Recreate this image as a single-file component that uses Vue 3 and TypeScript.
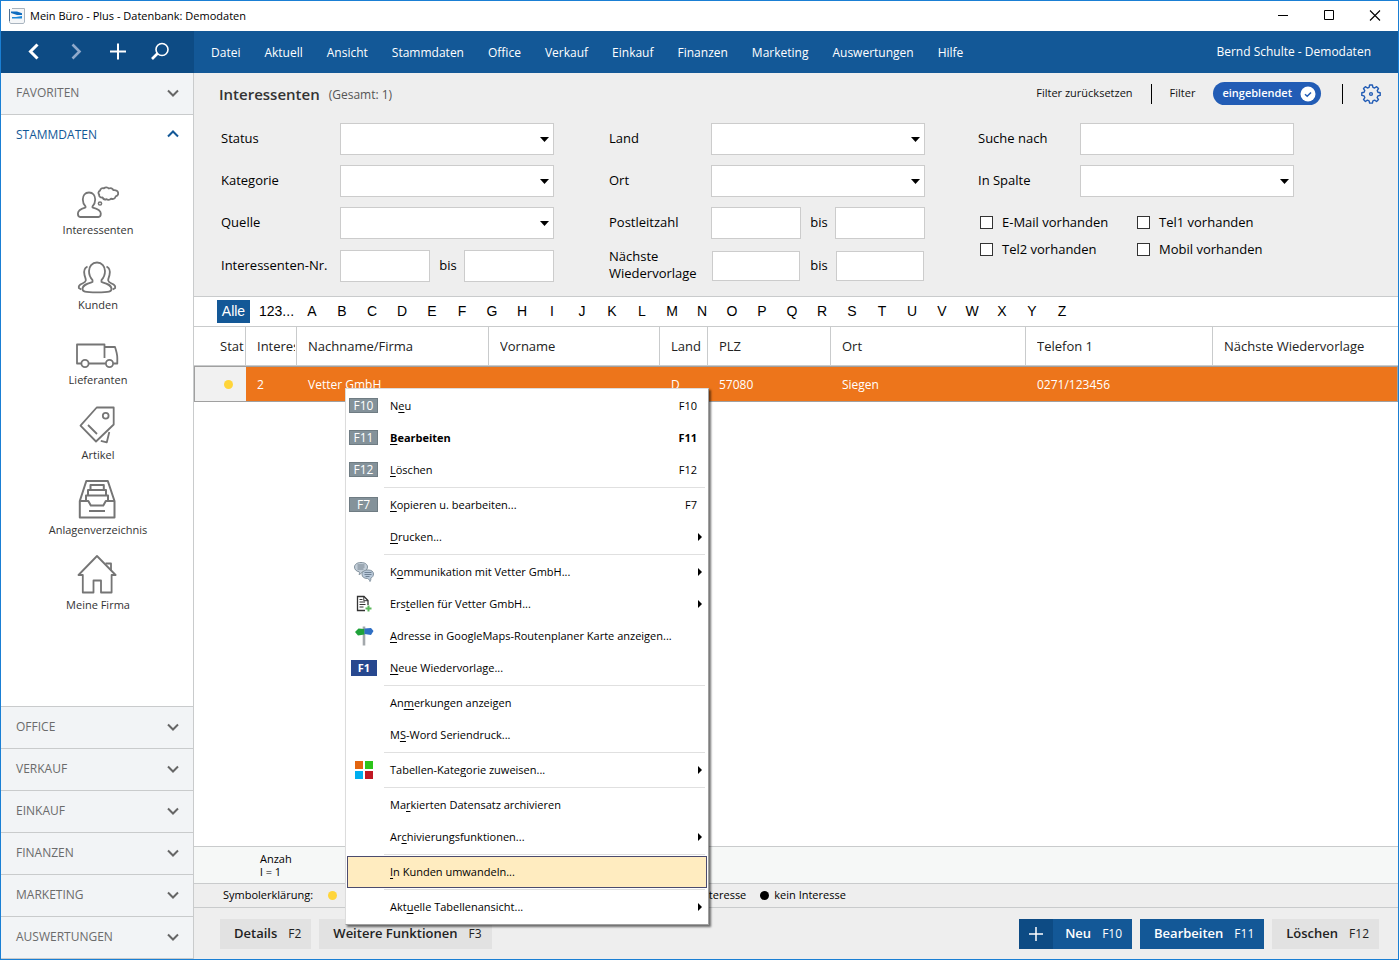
<script setup lang="ts">
import { ref } from 'vue'

interface MenuEntry {
  before: string
  key: string
  after: string
  shortcut?: string
  badge?: string
  icon?: 'chat' | 'doc' | 'sign' | 'f1' | 'tiles'
  submenu?: boolean
  bold?: boolean
  active?: boolean
}

const mainMenu = ['Datei', 'Aktuell', 'Ansicht', 'Stammdaten', 'Office', 'Verkauf', 'Einkauf', 'Finanzen', 'Marketing', 'Auswertungen', 'Hilfe']
const modules = ['Interessenten', 'Kunden', 'Lieferanten', 'Artikel', 'Anlagenverzeichnis', 'Meine Firma']
const lowerSections = ['OFFICE', 'VERKAUF', 'EINKAUF', 'FINANZEN', 'MARKETING', 'AUSWERTUNGEN']
const letters = 'ABCDEFGHIJKLMNOPQRSTUVWXYZ'.split('')
const columns = ['Interes', 'Nachname/Firma', 'Vorname', 'Land', 'PLZ', 'Ort', 'Telefon 1', 'Nächste Wiedervorlage']
const row = ['2', 'Vetter GmbH', '', 'D', '57080', 'Siegen', '0271/123456', '']
const checks = ref([
  { id: 'email', label: 'E-Mail vorhanden', on: false },
  { id: 'tel1', label: 'Tel1 vorhanden', on: false },
  { id: 'tel2', label: 'Tel2 vorhanden', on: false },
  { id: 'mobil', label: 'Mobil vorhanden', on: false },
])

const menuGroups: MenuEntry[][] = [
  [
    { before: 'N', key: 'e', after: 'u', shortcut: 'F10', badge: 'F10' },
    { before: '', key: 'B', after: 'earbeiten', shortcut: 'F11', badge: 'F11', bold: true },
    { before: '', key: 'L', after: 'öschen', shortcut: 'F12', badge: 'F12' },
  ],
  [
    { before: '', key: 'K', after: 'opieren u. bearbeiten...', shortcut: 'F7', badge: 'F7' },
    { before: '', key: 'D', after: 'rucken...', submenu: true },
  ],
  [
    { before: 'K', key: 'o', after: 'mmunikation mit Vetter GmbH...', icon: 'chat', submenu: true },
    { before: 'Ers', key: 't', after: 'ellen für Vetter GmbH...', icon: 'doc', submenu: true },
    { before: '', key: 'A', after: 'dresse in GoogleMaps-Routenplaner Karte anzeigen...', icon: 'sign' },
    { before: '', key: 'N', after: 'eue Wiedervorlage...', icon: 'f1' },
  ],
  [
    { before: 'An', key: 'm', after: 'erkungen anzeigen' },
    { before: 'M', key: 'S', after: '-Word Seriendruck...' },
  ],
  [{ before: 'Tabellen-Kate', key: 'g', after: 'orie zuweisen...', icon: 'tiles', submenu: true }],
  [
    { before: 'Ma', key: 'r', after: 'kierten Datensatz archivieren' },
    { before: 'Ar', key: 'c', after: 'hivierungsfunktionen...', submenu: true },
  ],
  [{ before: '', key: 'I', after: 'n Kunden umwandeln...', active: true }],
  [{ before: 'Akt', key: 'u', after: 'elle Tabellenansicht...', submenu: true }],
]
</script>

<template>
  <div class="window">
    <header class="titlebar">
      <svg class="app-icon" width="16" height="16" viewBox="0 0 16 16" aria-hidden="true">
        <path d="M3 .5h12.5v13.5l-1 1.500H1.500L.5 14V2" fill="#f4f6f8" stroke="#a9b4bf" />
        <path d="M.5 1v12" stroke="#4f6f92" />
        <path d="M2 3.500h6l5 1.800v1.700H8L2 5z" fill="#0f6cbf" />
        <path d="M3 9h4l6-1v2.500H3z" fill="#1a86d9" />
      </svg>
      <span class="app-title">Mein Büro - Plus - Datenbank: Demodaten</span>
      <div class="win-buttons">
        <button type="button" aria-label="Minimieren"><svg width="12" height="12" viewBox="0 0 12 12"><path d="M1 5.500h10" stroke="#000" /></svg></button>
        <button type="button" aria-label="Maximieren"><svg width="12" height="12" viewBox="0 0 12 12"><path d="M1.500 .5h9v9h-9z" fill="none" stroke="#000" /></svg></button>
        <button type="button" aria-label="Schließen"><svg width="12" height="12" viewBox="0 0 12 12"><path d="M1 .5l10 10M11 .5L1 10.500" stroke="#000" stroke-width="1.100" /></svg></button>
      </div>
    </header>

    <div class="topbar">
      <div class="history">
        <button type="button" aria-label="Zurück"><svg width="20" height="20" viewBox="0 0 20 20"><path d="M13.500 2.500L6.500 9.500l7 7" fill="none" stroke="#fff" stroke-width="3" /></svg></button>
        <button type="button" aria-label="Vor"><svg width="20" height="20" viewBox="0 0 20 20"><path d="M6.500 2.500l7 7-7 7" fill="none" stroke="#8fa9cb" stroke-width="2.600" /></svg></button>
        <button type="button" aria-label="Neu anlegen"><svg width="20" height="20" viewBox="0 0 20 20"><path d="M10 1.500v16M2 9.500h16" stroke="#fff" stroke-width="2" /></svg></button>
        <button type="button" aria-label="Suchen"><svg width="20" height="20" viewBox="0 0 20 20"><circle cx="12" cy="7.500" r="6" fill="none" stroke="#fff" stroke-width="1.600" /><path d="M7.500 11.500L2 17" stroke="#fff" stroke-width="2.600" /></svg></button>
      </div>
      <nav class="main-menu">
        <button v-for="m in mainMenu" :key="m" type="button">{{ m }}</button>
      </nav>
      <span class="user">Bernd Schulte - Demodaten</span>
    </div>

    <div class="body">
      <aside class="sidebar">
        <button type="button" class="section">
          <span>FAVORITEN</span>
          <svg width="14" height="8" viewBox="0 0 14 8"><path d="M2 1.500l5 5 5-5" fill="none" stroke="#666" stroke-width="2" /></svg>
        </button>
        <button type="button" class="section open">
          <span>STAMMDATEN</span>
          <svg width="14" height="8" viewBox="0 0 14 8"><path d="M2 6.500l5-5 5 5" fill="none" stroke="#135897" stroke-width="2" /></svg>
        </button>
        <div class="modules">
          <button v-for="(m, i) in modules" :key="m" type="button" class="module">
            <svg width="44" height="40" viewBox="0 0 44 40" fill="none" stroke="#757575" stroke-width="1.800" stroke-linejoin="round">
              <g v-if="i === 0">
                <path d="M14 12.500c4 0 6.200 3 6.200 7 0 3.200-1.400 5.500-2.700 6.800v1.200c3.500.9 8.300 2 8.300 6 0 1.600-.8 3.500-2.300 3.500H5.200c-1.500 0-2.300-1.900-2.300-3.500 0-4 4.400-5.100 7.600-6v-1.200C9.200 25 7.800 22.700 7.800 19.500c0-4 2.200-7 6.200-7z" />
                <path d="M27.500 17.500c-2 .3-3.700-1-3.300-2.800-1.200-1.300-.9-3.400.8-4 .3-2 2.200-3 3.900-2.400 1.500-1.300 3.700-1.200 4.900.2 1.800-.9 4 0 4.600 1.700 2.500-.4 4.800 1 4.800 3.300 0 1.600-1.200 2.600-2.500 2.900-.4 2.200-2.800 3.200-4.600 2.200-1.400 1.600-3.600 1.500-4.600.5-1.500.7-3.200.1-4-1.600z" />
                <circle cx="25" cy="23.500" r="1.600" stroke-width="1.500" />
              </g>
              <g v-else-if="i === 1">
                <path d="M22 7.500c5 0 8 4 8 8.500 0 4.200-1.600 7-3.500 9v2c4.500 1.300 10 2.500 10 7 0 2.500-1.800 3.300-14.500 3.300S7.500 36.500 7.500 34c0-4.500 5.500-5.700 10-7v-2c-1.900-2-3.500-4.800-3.500-9 0-4.500 3-8.500 8-8.500z" />
                <path d="M12.500 11.500c-3 1.500-4 4.500-3 8.500.4 2 1.500 3.500 1.300 5.500-.3 2.500-4 2.800-6 4.500-1 .8-1.300 1.800-1 3l2.500 1.500" />
                <path d="M31.500 11.500c3 1.500 4 4.500 3 8.500-.4 2-1.500 3.500-1.300 5.500.3 2.500 4 2.800 6 4.500 1 .8 1.300 1.800 1 3l-2.500 1.500" />
              </g>
              <g v-else-if="i === 2">
                <path d="M6 33.500H2V14.500h27.500v13.500M14 33.500h16.500M29.500 17h10.500c1.500 4.500 2.300 7.500 2.300 11v5.500h-4" />
                <circle cx="10" cy="33.500" r="3.600" />
                <circle cx="34.500" cy="33.500" r="3.600" />
              </g>
              <g v-else-if="i === 3">
                <path d="M21.700 2.500h17v17L21 36.500 5.500 20.700z" />
                <circle cx="30.700" cy="10.700" r="2.900" />
                <path d="M13 20l9 9M34.300 27l-2.500 10.300-6-1.500" />
              </g>
              <g v-else-if="i === 4" stroke-width="2">
                <path d="M4.800 21L11.300 1h21.500l6.700 20v16.500H4.800zM4.800 21h8.500l2.500 4.500h12.500l2.500-4.500h8.700" />
                <path d="M15.500 9.500V5h13.300v4.500M13 15.500V10h18v5.500M11 20.500V15.500h22v5" />
                <path d="M14 31h16" />
              </g>
              <g v-else>
                <path d="M7.800 20H3.500L22 1l18.600 19h-4v17.500H26V25.500h-7.500v12H7.800z" />
                <path d="M30.500 8.500h5.500v7.500" />
              </g>
            </svg>
            <span>{{ m }}</span>
          </button>
        </div>
        <button v-for="s in lowerSections" :key="s" type="button" class="section lower">
          <span>{{ s }}</span>
          <svg width="14" height="8" viewBox="0 0 14 8"><path d="M2 1.500l5 5 5-5" fill="none" stroke="#666" stroke-width="2" /></svg>
        </button>
      </aside>

      <main class="content">
        <div class="head">
          <h1>Interessenten</h1>
          <span class="count">(Gesamt: 1)</span>
          <div class="head-tools">
            <button type="button" class="plain">Filter zurücksetzen</button>
            <i class="bar"></i>
            <span class="filter-word">Filter</span>
            <button type="button" class="toggle">
              <span>eingeblendet</span>
              <svg width="16" height="16" viewBox="0 0 16 16"><circle cx="8" cy="8" r="7.500" fill="#fff" /><path d="M5 8.200l2.200 2.100L11 6.400" fill="none" stroke="#225cb5" stroke-width="1.500" /></svg>
            </button>
            <i class="bar second"></i>
            <button type="button" class="gear" aria-label="Einstellungen">
              <svg width="20" height="20" viewBox="0 0 20 20" fill="none" stroke="#225cb5" stroke-width="1.400" stroke-linejoin="round">
                <path d="M8.600 1h2.800l.5 2.300 1.700.7 2-1.300 1.900 1.900-1.300 2 .7 1.700 2.300.5v2.600l-2.300.5-.7 1.700 1.300 2-1.900 1.900-2-1.300-1.700.7-.5 2.200H8.600l-.5-2.200-1.700-.7-2 1.300-1.900-1.900 1.300-2-.7-1.700L.8 11.400V8.800l2.300-.5.7-1.700-1.300-2 1.900-1.900 2 1.300 1.700-.7z" />
                <circle cx="10" cy="10" r="1.400" />
              </svg>
            </button>
          </div>
        </div>

        <form class="filters" @submit.prevent>
          <div class="group g1">
            <label for="f-status">Status</label><select id="f-status"></select>
            <label for="f-kat">Kategorie</label><select id="f-kat"></select>
            <label for="f-quelle">Quelle</label><select id="f-quelle"></select>
            <label for="f-nr">Interessenten-Nr.</label>
            <div class="range"><input id="f-nr" type="text" /><label for="f-nr2">bis</label><input id="f-nr2" type="text" /></div>
          </div>
          <div class="group g2">
            <label for="f-land">Land</label><select id="f-land"></select>
            <label for="f-ort">Ort</label><select id="f-ort"></select>
            <label for="f-plz">Postleitzahl</label>
            <div class="range"><input id="f-plz" type="text" /><label for="f-plz2">bis</label><input id="f-plz2" type="text" /></div>
            <label for="f-wv">Nächste Wiedervorlage</label>
            <div class="range small"><input id="f-wv" type="text" /><label for="f-wv2">bis</label><input id="f-wv2" type="text" /></div>
          </div>
          <div class="group g3">
            <label for="f-suche">Suche nach</label><input id="f-suche" type="text" />
            <label for="f-spalte">In Spalte</label><select id="f-spalte"></select>
            <div class="checks">
              <label v-for="c in checks" :key="c.id" :for="c.id"><input :id="c.id" v-model="c.on" type="checkbox" /><span>{{ c.label }}</span></label>
            </div>
          </div>
        </form>

        <div class="alphabet">
          <button type="button" class="all">Alle</button>
          <button type="button" class="num">123...</button>
          <button v-for="l in letters" :key="l" type="button">{{ l }}</button>
        </div>

        <div class="grid">
          <table>
            <colgroup>
              <col class="c-stat" /><col class="c-nr" /><col class="c-name" /><col class="c-vor" /><col class="c-land" /><col class="c-plz" /><col class="c-ort" /><col class="c-tel" /><col />
            </colgroup>
            <thead>
              <tr>
                <th class="stat"><div>Stat</div></th>
                <th v-for="c in columns" :key="c"><div>{{ c }}</div></th>
              </tr>
            </thead>
            <tbody>
              <tr>
                <td class="stat"><i class="dot yellow"></i></td>
                <td v-for="(v, i) in row" :key="i">{{ v }}</td>
              </tr>
            </tbody>
          </table>
        </div>

        <div class="summary">Anzah<br />l = 1</div>
        <div class="legend">
          <span>Symbolerklärung:</span>
          <i class="dot yellow"></i>
          <span class="interest">Interesse</span>
          <i class="dot black"></i>
          <span>kein Interesse</span>
        </div>
        <footer class="actions">
          <button type="button" class="act">Details<small>F2</small></button>
          <button type="button" class="act">Weitere Funktionen<small>F3</small></button>
          <div class="right">
            <button type="button" class="act blue new">
              <span class="plus"><svg width="14" height="14" viewBox="0 0 14 14"><path d="M7 0v14M0 7h14" stroke="#fff" stroke-width="1.500" /></svg></span>Neu<small>F10</small>
            </button>
            <button type="button" class="act blue">Bearbeiten<small>F11</small></button>
            <button type="button" class="act">Löschen<small>F12</small></button>
          </div>
        </footer>
      </main>
    </div>

    <div class="context" role="menu">
      <div v-for="(g, gi) in menuGroups" :key="gi" class="ctx-group">
        <button v-for="e in g" :key="e.after" type="button" role="menuitem" class="ctx-item" :class="{ bold: e.bold, active: e.active }">
          <span class="ctx-icon">
            <b v-if="e.badge" class="badge">{{ e.badge }}</b>
            <b v-else-if="e.icon === 'f1'" class="badge-f1">F1</b>
            <svg v-else-if="e.icon === 'chat'" width="22" height="22" viewBox="0 0 22 22">
              <path d="M8 1.500c4 0 6.500 1.800 6.500 4.500S12 10.800 9 11c-.5 1.500-1.500 2-3 2.500.6-1 .6-1.800.2-2.700C3.300 10.300 1.500 8.500 1.500 6S4 1.500 8 1.500z" fill="#c3ced8" stroke="#82919d" />
              <path d="M4.500 4h7M4.500 6h7M4.500 8h6" stroke="#74828e" />
              <path d="M15 9c3.500 0 5.500 1.500 5.500 4 0 2-1.200 3.500-2.800 4.200.2 1 .3 2-.7 3.300-.6-1.500-1.300-2.500-2.500-3-3.500 0-5.500-1.600-5.500-4.200S11.500 9 15 9z" fill="#b9c9da" stroke="#82919d" />
              <path d="M11.500 11.500h7M11.500 13.500h7M12.500 15.500h4" stroke="#6f8194" />
            </svg>
            <svg v-else-if="e.icon === 'doc'" width="18" height="18" viewBox="0 0 18 18" fill="none">
              <path d="M10 15.500H2.500v-14H9l4 4V10" stroke="#333" stroke-width="1.300" />
              <path d="M8.800 1.500v4.200H13" stroke="#333" />
              <path d="M4.500 4.500h3M4.500 7h5.500M4.500 9.500h6M4.500 12h4" stroke="#333" />
              <path d="M13.500 10.500v6M10.500 13.500h6" stroke="#5cb85c" stroke-width="2" />
            </svg>
            <svg v-else-if="e.icon === 'sign'" width="20" height="20" viewBox="0 0 20 20">
              <path d="M10 .5V19.500" stroke="#a3a8ac" stroke-width="2.600" />
              <path d="M1 6L4.500 2.500l6 .5v5.500L4 9.500z" fill="#1fa23a" />
              <path d="M10.500 2.500L17 2l2.500 3-2.500 4-6.500-1z" fill="#2f6fc4" />
            </svg>
            <svg v-else-if="e.icon === 'tiles'" width="18" height="18" viewBox="0 0 18 18">
              <path d="M0 0h8v8H0z" fill="#e2640f" /><path d="M10 0h8v8h-8z" fill="#2dc41a" /><path d="M0 10h8v8H0z" fill="#00aeef" /><path d="M10 10h8v8h-8z" fill="#c01823" />
            </svg>
          </span>
          <span class="ctx-label">{{ e.before }}<u>{{ e.key }}</u>{{ e.after }}</span>
          <span v-if="e.shortcut" class="ctx-key">{{ e.shortcut }}</span>
          <svg v-if="e.submenu" class="ctx-arrow" width="4" height="8" viewBox="0 0 4 8"><path d="M0 0l4 4-4 4z" /></svg>
        </button>
      </div>
    </div>
  </div>
</template>

<style>
body {
  margin: 0;
}
</style>

<style scoped>
* {
  box-sizing: border-box;
}
.window {
  position: relative;
  display: flex;
  flex-direction: column;
  min-height: 100vh;
  border: 1px solid #1a7fd4;
  background: #fff;
  color: #111;
  font-family: "Open Sans", "Noto Sans", sans-serif;
  font-size: 13px;
}
button {
  border: 0;
  padding: 0;
  background: none;
  color: inherit;
  font: inherit;
}
svg {
  display: block;
  flex: none;
}
.titlebar {
  display: flex;
  align-items: center;
  height: 30px;
  padding: 0 0 1px 8px;
  color: #000;
  font-size: 11px;
  font-weight: 500;
}
.app-title {
  margin-left: 5px;
}
.win-buttons {
  display: flex;
  margin-left: auto;
}
.win-buttons button {
  display: flex;
  align-items: center;
  justify-content: center;
  width: 46px;
  height: 28px;
}
.topbar {
  display: flex;
  height: 42px;
  background: #135897;
  color: #fff;
}
.history {
  display: flex;
  align-items: center;
  gap: 22px;
  width: 193px;
  padding-left: 23px;
  background: #0d4b84;
}
.main-menu {
  display: flex;
  align-items: center;
  gap: 24px;
  padding-left: 17px;
  font-size: 12px;
}
.user {
  margin: auto 27px auto auto;
  padding-bottom: 1px;
  font-size: 12px;
}
.body {
  display: flex;
  flex: 1;
}
.sidebar {
  display: flex;
  flex: none;
  flex-direction: column;
  width: 193px;
  border-right: 1px solid #c9cbcc;
  border-bottom: 1px solid #c9cbcc;
  background: #fff;
}
.section {
  display: flex;
  align-items: center;
  justify-content: space-between;
  height: 42px;
  padding: 0 13px 2px 15px;
  border-bottom: 1px solid #c9cbcc;
  background: #f2f4f6;
  color: #6b6b6b;
  font-size: 12px;
}
.section.open {
  padding-bottom: 4px;
  border-bottom: 0;
  background: #fff;
  color: #135897;
}
.section.lower {
  border-top: 1px solid #c9cbcc;
  border-bottom: 0;
}
.modules {
  display: flex;
  flex: 1;
  flex-direction: column;
  padding-top: 23px;
}
.module {
  display: flex;
  flex-direction: column;
  align-items: center;
  height: 75px;
  color: #333;
  font-size: 11px;
  font-weight: 500;
  line-height: 20px;
}
.module span {
  padding-left: 2px;
}
.content {
  display: flex;
  flex: 1;
  flex-direction: column;
  min-width: 0;
}
.head {
  display: flex;
  align-items: center;
  height: 42px;
  padding: 0 17px 0 25px;
  background: #eee;
}
h1 {
  margin: 0;
  color: #333;
  font-size: 15px;
  font-weight: 600;
}
.count {
  margin-left: 9px;
  color: #555;
  font-size: 12px;
}
.head-tools {
  display: flex;
  align-items: center;
  margin-left: auto;
  padding-bottom: 1px;
  font-size: 11px;
}
.plain,
.filter-word,
.toggle span {
  padding-bottom: 2px;
}
.bar {
  width: 1px;
  height: 20px;
  margin: 0 18px;
  background: #000;
}
.bar.second {
  margin: 0 18px 0 21px;
}
.toggle {
  display: flex;
  align-items: center;
  gap: 8px;
  height: 23px;
  margin-left: 18px;
  padding: 0 5px 0 9px;
  border-radius: 12px;
  background: #225cb5;
  color: #fff;
  font-weight: 600;
}
.filters {
  display: flex;
  padding: 8px 27px 13px;
  border-bottom: 1px solid #c9cbcc;
  background: #eee;
  color: #000;
  font-weight: 500;
}
.filters label {
  padding-bottom: 2px;
}
.group {
  display: grid;
  grid-template-rows: 32px 32px 32px 34px;
  align-content: start;
  align-items: center;
  row-gap: 10px;
  line-height: 17px;
}
.g1 {
  grid-template-columns: 119px 214px;
  margin-right: 55px;
}
.g2 {
  grid-template-columns: 102px 214px;
  margin-right: 53px;
}
.g3 {
  grid-template-columns: 102px 214px;
}
.range {
  display: grid;
  grid-template-columns: 90px 1fr 90px;
  align-items: center;
  text-align: center;
}
.range label {
  padding-left: 2px;
}
.range.small {
  grid-template-columns: 88px 1fr 88px;
  padding: 0 1px;
}
.filters input[type="text"],
.filters select {
  width: 100%;
  height: 32px;
  margin: 0;
  padding: 0 8px;
  border: 1px solid #ccc;
  border-radius: 0;
  background: #fff;
  font: inherit;
}
.filters .range.small input[type="text"] {
  height: 30px;
}
.filters select {
  appearance: none;
  background: #fff url("data:image/svg+xml,%3Csvg xmlns='http://www.w3.org/2000/svg' width='9' height='5'%3E%3Cpath d='M0 0h9L4.500 5z'/%3E%3C/svg%3E") no-repeat right 4px center;
}
.checks {
  display: grid;
  grid-column: 1 / 3;
  grid-row: 3 / 5;
  grid-template-columns: 157px 1fr;
  grid-auto-rows: 27px;
  align-self: start;
  align-items: center;
  padding: 2px 0 0 2px;
}
.checks label {
  display: flex;
  align-items: center;
  gap: 9px;
  padding: 0;
  white-space: nowrap;
}
.checks input {
  appearance: none;
  width: 13px;
  height: 13px;
  margin: 0;
  border: 1px solid #333;
  background: #fff;
}
.checks input:checked {
  background: #135897;
}
.alphabet {
  display: flex;
  align-items: center;
  height: 30px;
  padding-left: 23px;
  border-bottom: 1px solid #c9cbcc;
  color: #000;
  font-family: "Liberation Sans", Arial, sans-serif;
  font-size: 14px;
}
.alphabet button {
  width: 30px;
  padding-bottom: 2px;
}
.alphabet .all {
  width: 33px;
  height: 23px;
  background: #135897;
  color: #fff;
}
.alphabet .num {
  width: 33px;
  margin: 0 5px 0 9px;
  text-align: left;
}
.grid {
  flex: 1;
}
table {
  width: 100%;
  table-layout: fixed;
  border-collapse: separate;
  border-spacing: 0;
}
.c-stat { width: 52px; }
.c-nr { width: 51px; }
.c-name { width: 192px; }
.c-vor { width: 171px; }
.c-land { width: 48px; }
.c-plz { width: 123px; }
.c-ort { width: 195px; }
.c-tel { width: 187px; }
th {
  height: 39px;
  padding: 0 1px 0 11px;
  border-right: 1px solid #c9cbcc;
  border-bottom: 1px solid #c9cbcc;
  color: #222;
  font-weight: 400;
  text-align: left;
}
th:last-child {
  border-right: 0;
}
th div {
  overflow: hidden;
  white-space: nowrap;
}
th.stat {
  padding-left: 26px;
}
td {
  height: 36px;
  padding: 0 2px 0 11px;
  border-top: 1px solid #a0a0a0;
  border-bottom: 1px solid #a0a0a0;
  background: #ed751b;
  color: #fff;
  font-size: 12px;
  white-space: nowrap;
}
td:last-child {
  border-right: 1px solid #a0a0a0;
}
td.stat {
  padding-left: 29px;
  border-left: 1px solid #a0a0a0;
  background: #f1f1f1;
}
.dot {
  display: block;
  flex: none;
  width: 9px;
  height: 9px;
  border-radius: 50%;
}
.yellow { background: #ffd53a; }
.black { background: #000; }
.summary {
  height: 37px;
  padding: 5px 0 0 66px;
  border-top: 1px solid #c9cbcc;
  background: #f6f8f7;
  color: #000;
  font-size: 11px;
  line-height: 13px;
}
.legend {
  display: flex;
  align-items: center;
  height: 24px;
  padding-left: 29px;
  border-top: 1px solid #c9cbcc;
  background: #eee;
  color: #000;
  font-size: 11px;
}
.legend span { padding-bottom: 2px; }
.legend .yellow { margin-left: 15px; }
.legend .interest { margin-left: 362px; }
.legend .black { margin: 0 5px 0 14px; }
.actions {
  display: flex;
  align-items: center;
  gap: 8px;
  height: 52px;
  padding: 0 19px 0 26px;
  border-top: 1px solid #c9cbcc;
  background: #eee;
}
.right {
  display: flex;
  gap: 8px;
  margin-left: auto;
}
.act {
  display: flex;
  align-items: center;
  height: 30px;
  padding: 0 10px 1px 14px;
  background: #e2e2e2;
  color: #222;
  font-weight: 600;
  font-size: 13px;
}
.act small {
  margin-left: 11px;
  font-size: 12px;
  font-weight: 400;
}
.act.blue {
  background: #135897;
  color: #fff;
}
.act.new {
  padding-left: 0;
}
.plus {
  display: flex;
  align-items: center;
  justify-content: center;
  width: 34px;
  height: 30px;
  margin: 0 12px -1px 0;
  background: #0d4b84;
}
.context {
  position: absolute;
  top: 387px;
  left: 344px;
  width: 364px;
  padding: 1px;
  border: 1px solid #dcdcdc;
  border-right-color: #a0a0a0;
  border-bottom-color: #a0a0a0;
  background: #fff;
  box-shadow: 2px 2px 2px rgba(0, 0, 0, 0.55);
  color: #000;
  font-size: 11px;
  font-weight: 500;
}
.ctx-group + .ctx-group {
  padding-top: 3px;
  background: linear-gradient(#e0e0e0, #e0e0e0) no-repeat 37px 1px / calc(100% - 39px) 1px;
}
.ctx-item {
  display: flex;
  align-items: center;
  width: 100%;
  height: 32px;
  padding: 0 9px 1px 0;
  border: 1px solid transparent;
  white-space: nowrap;
}
.ctx-item.bold {
  font-weight: 700;
}
.ctx-item.active {
  border-color: #4b4b6e;
  background: #ffecc0;
}
.ctx-icon {
  display: flex;
  align-items: center;
  justify-content: center;
  width: 32px;
  margin-right: 10px;
}
.badge,
.badge-f1 {
  width: 29px;
  height: 15px;
  margin-right: 1px;
  border: 1px solid #6f7c83;
  background: #84929a;
  color: #fff;
  font-size: 12px;
  font-weight: 400;
  line-height: 13px;
  text-align: center;
}
.badge-f1 {
  width: 26px;
  height: 16px;
  margin-right: 0;
  border: 0;
  background: #27488f;
  font-size: 11px;
  font-weight: 700;
  line-height: 16px;
}
.ctx-key {
  margin-left: auto;
}
.ctx-arrow {
  margin: 0 -5px 0 auto;
}
u {
  text-underline-offset: 2px;
}
</style>
